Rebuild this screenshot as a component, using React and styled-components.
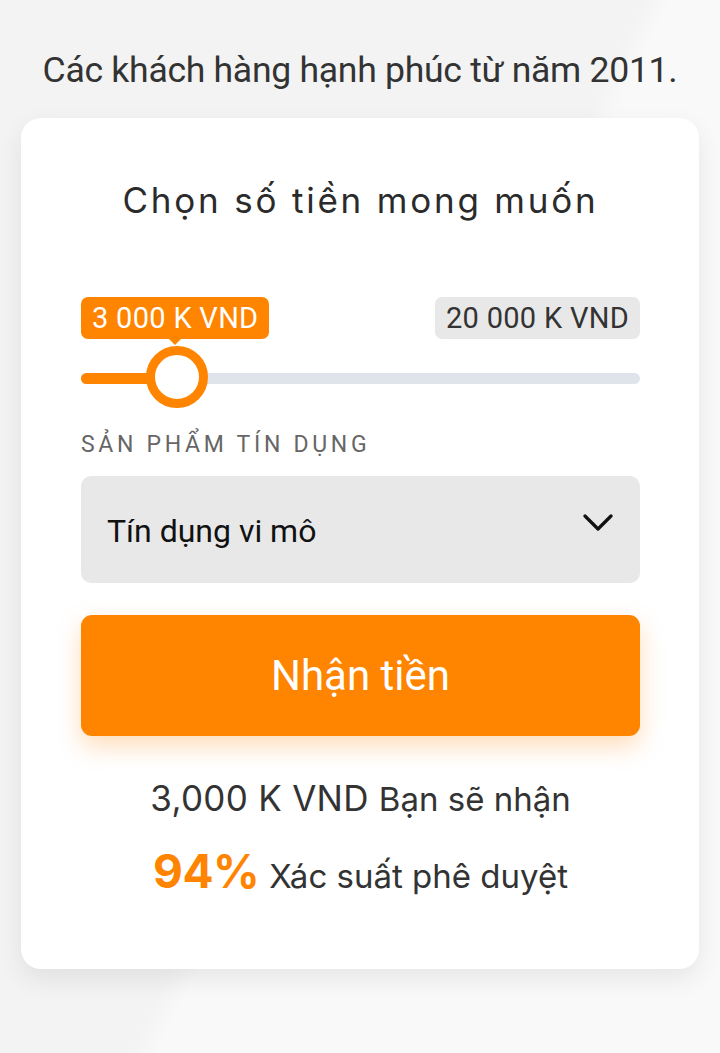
import React from "react";
import styled, { createGlobalStyle } from "styled-components";

const GlobalStyle = createGlobalStyle`
  html, body {
    margin: 0;
    padding: 0;
  }
  body {
    min-height: 1053px;
    background: linear-gradient(116deg, #f3f3f3 52%, #f9f9f9 54.5%);
    font-family: Roboto, "Liberation Sans", sans-serif;
  }
`;

const Page = styled.div`
  padding: 0 21px 80px;
  display: flex;
  flex-direction: column;
  align-items: stretch;
`;

const Tagline = styled.p`
  margin: 48px 0 0;
  text-align: center;
  font-family: Roboto, "Liberation Sans", sans-serif;
  font-size: 35.6px;
  line-height: 44px;
  letter-spacing: -0.3px;
  color: #333;
`;

const Card = styled.div`
  margin-top: 26px;
  background: #fff;
  border-radius: 20px;
  box-shadow: 0 10px 26px rgba(0, 0, 0, 0.08);
  padding: 59px 59px 70px 60px;
  display: flex;
  flex-direction: column;
`;

const Heading = styled.h2`
  margin: 0;
  text-align: center;
  font-family: Inter, "Noto Sans", sans-serif;
  font-weight: 400;
  font-size: 35px;
  line-height: 46px;
  letter-spacing: 2.8px;
  color: #2b2b2b;
`;

const Slider = styled.div`
  margin-top: 74px;
  display: flex;
  flex-direction: column;
`;

const Tags = styled.div`
  display: flex;
  justify-content: space-between;
  align-items: center;
`;

const Tag = styled.span`
  position: relative;
  height: 42px;
  padding: 0 11px;
  border-radius: 7px;
  display: flex;
  align-items: center;
  font-family: Roboto, "Liberation Sans", sans-serif;
  font-size: 29px;
  letter-spacing: 0.3px;
  background: ${(p) => (p.$active ? "#ff8400" : "#e8e8e8")};
  color: ${(p) => (p.$active ? "#fff" : "#333")};

  ${(p) =>
    p.$active &&
    `
    &::after {
      content: "";
      position: absolute;
      left: 50%;
      bottom: -6px;
      margin-left: -6px;
      border-left: 6px solid transparent;
      border-right: 6px solid transparent;
      border-top: 6px solid #ff8400;
    }
  `}
`;

const Track = styled.div`
  position: relative;
  margin-top: 34px;
  height: 11px;
  border-radius: 6px;
  background: #dfe4eb;
`;

const Fill = styled.div`
  height: 100%;
  border-radius: 6px;
  background: #ff8400;
`;

const Thumb = styled.div`
  position: absolute;
  top: 50%;
  width: 62px;
  height: 62px;
  box-sizing: border-box;
  margin: -33px 0 0 -31px;
  border-radius: 50%;
  border: 9px solid #ff8400;
  background: #fff;
`;

const FieldLabel = styled.div`
  margin-top: 47px;
  font-family: Roboto, "Liberation Sans", sans-serif;
  font-size: 23px;
  line-height: 28px;
  letter-spacing: 3.7px;
  color: #666;
`;

const Select = styled.div`
  margin-top: 17px;
  height: 107px;
  border-radius: 10px;
  background: #e8e8e8;
  display: flex;
  align-items: center;
  justify-content: space-between;
  padding: 0 27px 0 26px;
  font-family: Roboto, "Liberation Sans", sans-serif;
  font-size: 32px;
  color: #111;

  span {
    margin-top: 2px;
  }
  svg {
    margin-top: -14px;
  }
`;

const Button = styled.button`
  margin-top: 32px;
  height: 121px;
  border: none;
  border-radius: 11px;
  background: #ff8400;
  box-shadow: 0 10px 24px rgba(255, 132, 0, 0.28);
  color: #fff;
  font-family: Roboto, "Liberation Sans", sans-serif;
  font-size: 42px;
  cursor: pointer;
`;

const Summary = styled.div`
  margin-top: 39px;
  display: flex;
  flex-direction: column;
  align-items: center;
  gap: 26px;
  font-family: Inter, "Noto Sans", sans-serif;
  color: #333;
`;

const Line = styled.div`
  display: flex;
  align-items: baseline;
  gap: 10px;
  font-size: 33px;
  line-height: 46px;
`;

const Amount = styled.span`
  font-size: 35px;
  letter-spacing: 0.3px;
`;

const Percent = styled.span`
  font-size: 46px;
  font-weight: 700;
  letter-spacing: -0.5px;
  color: #ff8400;
`;

function Chevron() {
  return (
    <svg width="30" height="18" viewBox="0 0 30 18" fill="none">
      <polyline
        points="2,2 15,15 28,2"
        stroke="#111"
        strokeWidth="3.2"
        strokeLinecap="round"
        strokeLinejoin="round"
      />
    </svg>
  );
}

export default function App() {
  const fraction = 0.172;
  return (
    <>
      <GlobalStyle />
      <Page>
        <Tagline>Các khách hàng hạnh phúc từ năm 2011.</Tagline>
        <Card>
          <Heading>Chọn số tiền mong muốn</Heading>
          <Slider>
            <Tags>
              <Tag $active>3 000 K VND</Tag>
              <Tag>20 000 K VND</Tag>
            </Tags>
            <Track>
              <Fill style={{ width: `${fraction * 100}%` }} />
              <Thumb style={{ left: `${fraction * 100}%` }} />
            </Track>
          </Slider>
          <FieldLabel>SẢN PHẨM TÍN DỤNG</FieldLabel>
          <Select>
            <span>Tín dụng vi mô</span>
            <Chevron />
          </Select>
          <Button>Nhận tiền</Button>
          <Summary>
            <Line>
              <Amount>3,000 K VND</Amount>
              <span>Bạn sẽ nhận</span>
            </Line>
            <Line>
              <Percent>94%</Percent>
              <span>Xác suất phê duyệt</span>
            </Line>
          </Summary>
        </Card>
      </Page>
    </>
  );
}
